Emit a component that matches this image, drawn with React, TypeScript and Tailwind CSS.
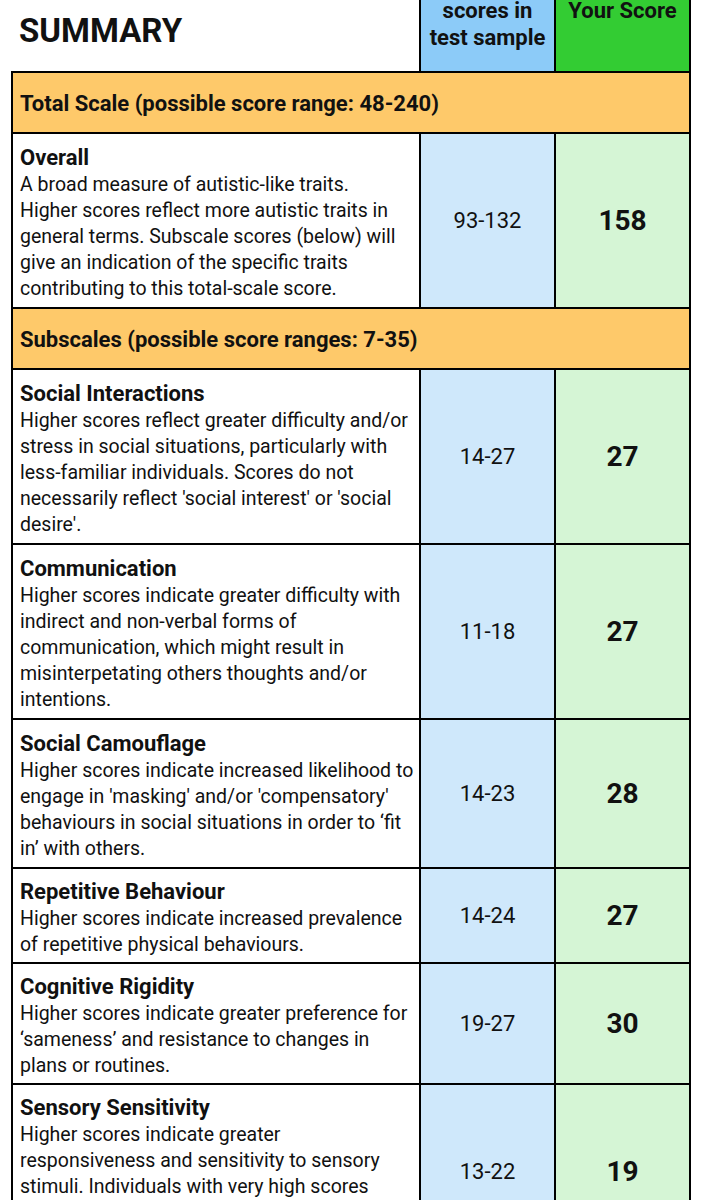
type Scale = {
  title: string;
  lines: string[];
  range: string;
  score: string;
  tall?: boolean;
};

const overall: Scale = {
  title: "Overall",
  lines: [
    "A broad measure of autistic-like traits.",
    "Higher scores reflect more autistic traits in",
    "general terms. Subscale scores (below) will",
    "give an indication of the specific traits",
    "contributing to this total-scale score.",
  ],
  range: "93-132",
  score: "158",
};

const subscales: Scale[] = [
  {
    title: "Social Interactions",
    lines: [
      "Higher scores reflect greater difficulty and/or",
      "stress in social situations, particularly with",
      "less-familiar individuals. Scores do not",
      "necessarily reflect 'social interest' or 'social",
      "desire'.",
    ],
    range: "14-27",
    score: "27",
  },
  {
    title: "Communication",
    lines: [
      "Higher scores indicate greater difficulty with",
      "indirect and non-verbal forms of",
      "communication, which might result in",
      "misinterpetating others thoughts and/or",
      "intentions.",
    ],
    range: "11-18",
    score: "27",
  },
  {
    title: "Social Camouflage",
    lines: [
      "Higher scores indicate increased likelihood to",
      "engage in 'masking' and/or 'compensatory'",
      "behaviours in social situations in order to \u2018fit",
      "in\u2019 with others.",
    ],
    range: "14-23",
    score: "28",
  },
  {
    title: "Repetitive Behaviour",
    lines: [
      "Higher scores indicate increased prevalence",
      "of repetitive physical behaviours.",
    ],
    range: "14-24",
    score: "27",
  },
  {
    title: "Cognitive Rigidity",
    lines: [
      "Higher scores indicate greater preference for",
      "\u2018sameness\u2019 and resistance to changes in",
      "plans or routines.",
    ],
    range: "19-27",
    score: "30",
  },
  {
    title: "Sensory Sensitivity",
    lines: [
      "Higher scores indicate greater",
      "responsiveness and sensitivity to sensory",
      "stimuli. Individuals with very high scores",
    ],
    range: "13-22",
    score: "19",
    tall: true,
  },
];

function ScaleRow({ scale }: { scale: Scale }) {
  const short = scale.lines.length < 4;
  const pad = scale.tall
    ? "pt-[9px] pb-[58px]"
    : short
      ? "pt-[9px] pb-[4px]"
      : "pt-[10px] pb-[5px]";
  return (
    <div className="grid grid-cols-[406px_135px_135px] border-b-2 border-black">
      <div className={`bg-white pl-[7px] pr-1 ${pad}`}>
        <div className="text-[22px] font-bold leading-[28px]">{scale.title}</div>
        {scale.lines.map((line) => (
          <div key={line} className="whitespace-nowrap text-[19.5px] leading-[26px]">
            {line}
          </div>
        ))}
      </div>
      <div className="flex items-center justify-center border-l-2 border-black bg-[#cfe8fb] text-[22px]">
        {scale.range}
      </div>
      <div className="flex items-center justify-center border-l-2 border-black bg-[#d5f5d5] text-[28px] font-bold">
        {scale.score}
      </div>
    </div>
  );
}

function Band({ children }: { children: string }) {
  return (
    <div className="flex h-[61px] items-center border-b-2 border-black bg-[#fec96a] pl-[7px] pt-[1px] text-[22px] font-bold">
      {children}
    </div>
  );
}

export default function App() {
  return (
    <div className="min-h-[1200px] bg-white font-['Roboto',sans-serif] text-[#111]">
      <div className="ml-[11px] w-[680px]">
        <div className="flex h-[71px]">
          <div className="w-[408px] pl-[8px] pt-[11px] text-[33px] font-bold leading-[40px]">
            SUMMARY
          </div>
          <div className="w-[135px] border-l-2 border-black bg-[#8ccbf8] text-center text-[22px] font-bold leading-[27px]">
            <div className="-mt-[3px]">scores in</div>
            <div>test sample</div>
          </div>
          <div className="w-[137px] border-x-2 border-black bg-[#33cc33] text-center text-[22px] font-bold leading-[27px]">
            <div className="-mt-[3px]">Your Score</div>
          </div>
        </div>
        <div className="border-x-2 border-t-2 border-black">
          <Band>Total Scale (possible score range: 48-240)</Band>
          <ScaleRow scale={overall} />
          <Band>Subscales (possible score ranges: 7-35)</Band>
          {subscales.map((s) => (
            <ScaleRow key={s.title} scale={s} />
          ))}
        </div>
      </div>
    </div>
  );
}
